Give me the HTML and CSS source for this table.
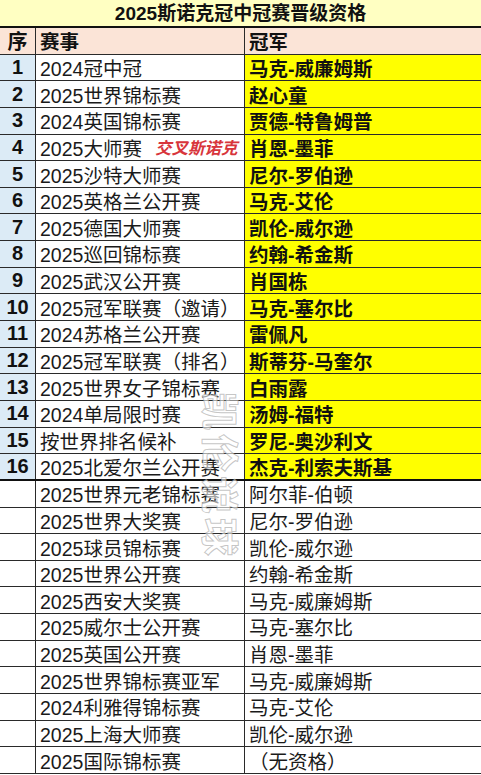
FILE: index.html
```html
<!DOCTYPE html>
<html lang="zh-CN">
<head>
<meta charset="utf-8">
<title>2025斯诺克冠中冠赛晋级资格</title>
<link rel="stylesheet" href="styles.css">
</head>
<body>
<div class="sheet">
  <div class="title">2025斯诺克冠中冠赛晋级资格</div>
  <div class="row head"><div class="c idx">序</div><div class="c ev">赛事</div><div class="c ch">冠军</div></div>
  <div class="row q"><div class="c idx">1</div><div class="c ev">2024冠中冠</div><div class="c ch">马克-威廉姆斯</div></div>
  <div class="row q"><div class="c idx">2</div><div class="c ev">2025世界锦标赛</div><div class="c ch">赵心童</div></div>
  <div class="row q"><div class="c idx">3</div><div class="c ev">2024英国锦标赛</div><div class="c ch">贾德-特鲁姆普</div></div>
  <div class="row q"><div class="c idx">4</div><div class="c ev">2025大师赛<span class="note">交叉斯诺克</span></div><div class="c ch">肖恩-墨菲</div></div>
  <div class="row q"><div class="c idx">5</div><div class="c ev">2025沙特大师赛</div><div class="c ch">尼尔-罗伯逊</div></div>
  <div class="row q"><div class="c idx">6</div><div class="c ev">2025英格兰公开赛</div><div class="c ch">马克-艾伦</div></div>
  <div class="row q"><div class="c idx">7</div><div class="c ev">2025德国大师赛</div><div class="c ch">凯伦-威尔逊</div></div>
  <div class="row q"><div class="c idx">8</div><div class="c ev">2025巡回锦标赛</div><div class="c ch">约翰-希金斯</div></div>
  <div class="row q"><div class="c idx">9</div><div class="c ev">2025武汉公开赛</div><div class="c ch">肖国栋</div></div>
  <div class="row q"><div class="c idx">10</div><div class="c ev">2025冠军联赛（邀请）</div><div class="c ch">马克-塞尔比</div></div>
  <div class="row q"><div class="c idx">11</div><div class="c ev">2024苏格兰公开赛</div><div class="c ch">雷佩凡</div></div>
  <div class="row q"><div class="c idx">12</div><div class="c ev">2025冠军联赛（排名）</div><div class="c ch">斯蒂芬-马奎尔</div></div>
  <div class="row q"><div class="c idx">13</div><div class="c ev">2025世界女子锦标赛</div><div class="c ch">白雨露</div></div>
  <div class="row q"><div class="c idx">14</div><div class="c ev">2024单局限时赛</div><div class="c ch">汤姆-福特</div></div>
  <div class="row q"><div class="c idx">15</div><div class="c ev">按世界排名候补</div><div class="c ch">罗尼-奥沙利文</div></div>
  <div class="row q last"><div class="c idx">16</div><div class="c ev">2025北爱尔兰公开赛</div><div class="c ch">杰克-利索夫斯基</div></div>
  <div class="row"><div class="c idx"></div><div class="c ev">2025世界元老锦标赛</div><div class="c ch">阿尔菲-伯顿</div></div>
  <div class="row"><div class="c idx"></div><div class="c ev">2025世界大奖赛</div><div class="c ch">尼尔-罗伯逊</div></div>
  <div class="row"><div class="c idx"></div><div class="c ev">2025球员锦标赛</div><div class="c ch">凯伦-威尔逊</div></div>
  <div class="row"><div class="c idx"></div><div class="c ev">2025世界公开赛</div><div class="c ch">约翰-希金斯</div></div>
  <div class="row"><div class="c idx"></div><div class="c ev">2025西安大奖赛</div><div class="c ch">马克-威廉姆斯</div></div>
  <div class="row"><div class="c idx"></div><div class="c ev">2025威尔士公开赛</div><div class="c ch">马克-塞尔比</div></div>
  <div class="row"><div class="c idx"></div><div class="c ev">2025英国公开赛</div><div class="c ch">肖恩-墨菲</div></div>
  <div class="row"><div class="c idx"></div><div class="c ev">2025世界锦标赛亚军</div><div class="c ch">马克-威廉姆斯</div></div>
  <div class="row"><div class="c idx"></div><div class="c ev">2024利雅得锦标赛</div><div class="c ch">马克-艾伦</div></div>
  <div class="row"><div class="c idx"></div><div class="c ev">2025上海大师赛</div><div class="c ch">凯伦-威尔逊</div></div>
  <div class="row"><div class="c idx"></div><div class="c ev">2025国际锦标赛</div><div class="c ch">（无资格）</div></div>
  <div class="watermark">凯伦说球</div>
</div>
</body>
</html>
```

FILE: styles.css
```css
html, body {
  margin: 0;
  padding: 0;
  background: #ffffff;
}

.sheet {
  position: relative;
  width: 481px;
  font-family: "Liberation Sans", "Noto Sans CJK SC", sans-serif;
  color: #1a1a1a;
  overflow: hidden;
}

.title {
  height: 26px;
  line-height: 27px;
  background: #ffffc2;
  border-bottom: 2px solid #111;
  text-align: center;
  font-weight: bold;
  font-size: 19px;
  color: #111;
}

.row {
  display: grid;
  grid-template-columns: 36px 209px 1fr;
  height: 26.65px;
  box-sizing: border-box;
  border-bottom: 1px solid #2a2a2a;
  font-size: 19.5px;
}

.row.last {
  border-bottom: 2px solid #111;
}

.c {
  display: flex;
  align-items: center;
  overflow: hidden;
  white-space: nowrap;
  box-sizing: border-box;
}

.idx {
  justify-content: center;
  font-weight: bold;
  border-right: 1px solid #2a2a2a;
  color: #111;
  font-size: 20px;
}

.ev {
  padding-left: 4px;
  border-right: 1px solid #2a2a2a;
}

.ch {
  padding-left: 4px;
}

.head .c {
  background: #fbe4d7;
  font-weight: bold;
  color: #111;
}

.q .idx {
  background: #dcebf6;
}

.q .ch {
  background: #ffff00;
  font-weight: bold;
  color: #111;
}

.note {
  margin-left: 13px;
  font-size: 16.5px;
  font-weight: bold;
  font-style: italic;
  color: #d8353c;
}

.watermark {
  position: absolute;
  left: 250px;
  top: 392px;
  transform-origin: 0 0;
  transform: rotate(90deg);
  font-size: 38px;
  font-weight: bold;
  letter-spacing: 4px;
  white-space: nowrap;
  color: rgba(255, 255, 255, 0.6);
  -webkit-text-stroke: 1px rgba(160, 160, 160, 0.6);
}
```
